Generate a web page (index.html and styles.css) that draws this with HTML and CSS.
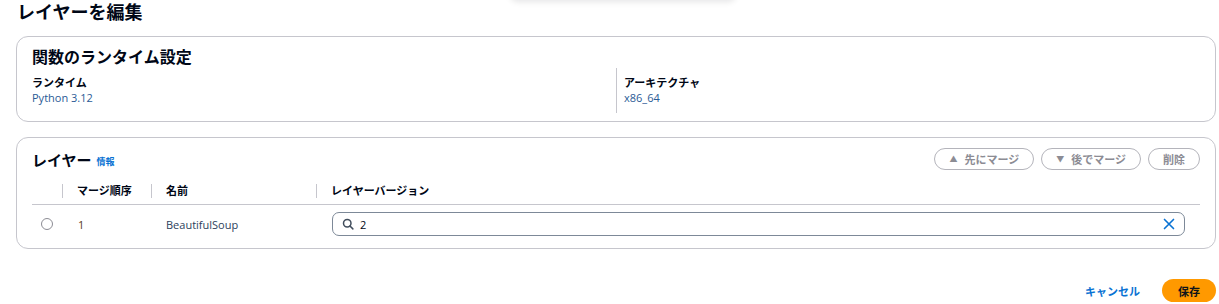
FILE: index.html
```html
<!DOCTYPE html>
<html lang="ja">
<head>
<meta charset="utf-8">
<link rel="stylesheet" href="styles.css">
</head>
<body>
<div class="popover-shadow"></div>
<main class="page">
  <h1 class="page-title">レイヤーを編集</h1>

  <section class="card">
    <h2 class="card-title">関数のランタイム設定</h2>
    <div class="kv-grid">
      <div class="kv">
        <div class="kv-label">ランタイム</div>
        <div class="kv-value">Python 3.12</div>
      </div>
      <div class="kv kv-divided">
        <div class="kv-label">アーキテクチャ</div>
        <div class="kv-value">x86_64</div>
      </div>
    </div>
  </section>

  <section class="card card-layers">
    <div class="card-header">
      <div class="card-header-title">
        <h2 class="card-title card-title-sm">レイヤー</h2>
        <a class="info-link">情報</a>
      </div>
      <div class="actions">
        <button class="btn-pill"><span class="tri">▲</span>先にマージ</button>
        <button class="btn-pill"><span class="tri">▼</span>後でマージ</button>
        <button class="btn-pill">削除</button>
      </div>
    </div>
    <div class="table">
      <div class="thead">
        <div class="th th-select"></div>
        <div class="th th-divided">マージ順序</div>
        <div class="th th-divided">名前</div>
        <div class="th th-divided">レイヤーバージョン</div>
      </div>
      <div class="tr">
        <div class="td td-select"><span class="radio"></span></div>
        <div class="td td-order">1</div>
        <div class="td td-name">BeautifulSoup</div>
        <div class="td td-version">
          <div class="search-input">
            <svg class="search-icon" width="12" height="12" viewBox="0 0 16 16"><circle cx="7" cy="7" r="5" fill="none" stroke="#414d5c" stroke-width="2"/><path d="M10.6 10.6 14.5 14.5" stroke="#414d5c" stroke-width="2" stroke-linecap="round"/></svg>
            <span class="search-value">2</span>
            <svg class="clear-icon" width="12" height="12" viewBox="0 0 16 16"><path d="M2 2 14 14M14 2 2 14" stroke="#0972d3" stroke-width="2.2" stroke-linecap="round"/></svg>
          </div>
        </div>
      </div>
    </div>
  </section>

  <div class="footer">
    <a class="cancel-link">キャンセル</a>
    <button class="btn-primary">保存</button>
  </div>
</main>
</body>
</html>
```

FILE: styles.css
```css
* { box-sizing: border-box; }
html, body {
  margin: 0;
  padding: 0;
  background: #ffffff;
}
body {
  font-family: "Open Sans", "Noto Sans CJK JP", sans-serif;
  color: #000716;
  font-size: 11px;
  width: 1219px;
  height: 304px;
  overflow: hidden;
  position: relative;
}
.popover-shadow {
  position: absolute;
  left: 510px;
  top: -20px;
  width: 226px;
  height: 20px;
  border-radius: 8px;
  box-shadow: 0 2px 6px rgba(0, 7, 22, 0.10);
  background: #fff;
}
.page {
  padding: 0 3px 0 16px;
}
.page-title {
  margin: 0;
  font-size: 18px;
  line-height: 24px;
  font-weight: 700;
  padding-left: 1px;
  color: #000716;
}
.card {
  margin-top: 12px;
  border: 1px solid #c6c6cd;
  border-radius: 12px;
  padding: 9px 15px 8px 15px;
}
.card-title {
  margin: 0;
  font-size: 16px;
  line-height: 22px;
  font-weight: 700;
  color: #000716;
}
.card-title-sm {
  font-size: 15px;
}
.kv-grid {
  display: grid;
  grid-template-columns: 1fr 1fr;
}
.kv {
  padding: 7px 0 8px 0;
}
.kv-divided {
  border-left: 1px solid #c6c6cd;
  padding-left: 7px;
}
.kv-label {
  font-size: 11px;
  line-height: 15px;
  font-weight: 700;
  color: #000716;
}
.kv-value {
  font-size: 11px;
  line-height: 15px;
  color: #2a5b96;
}
.card-layers {
  margin-top: 15px;
  padding: 10px 15px 5px 15px;
}
.card-header {
  display: flex;
  justify-content: space-between;
  align-items: center;
  height: 22px;
}
.card-header-title {
  display: flex;
  align-items: center;
  gap: 5px;
  padding-top: 2px;
}
.info-link {
  font-size: 9px;
  font-weight: 700;
  color: #0972d3;
  padding-top: 3px;
}
.actions {
  display: flex;
  gap: 7px;
}
.btn-pill {
  height: 22px;
  border: 1px solid #b4b4bb;
  border-radius: 12px;
  background: #fff;
  color: #8c8c94;
  font-family: inherit;
  font-size: 11px;
  font-weight: 700;
  padding: 0 14px;
  display: flex;
  align-items: center;
  gap: 7px;
  line-height: 1;
}
.tri {
  font-size: 8px;
  color: #8c8c94;
}
.table {
  margin-top: 7px;
}
.thead, .tr {
  display: grid;
  grid-template-columns: 30px 89px 165px 1fr;
}
.thead {
  height: 28px;
  border-bottom: 1px solid #c6c6cd;
  align-items: center;
}
.th {
  font-size: 11px;
  font-weight: 700;
  line-height: 15px;
  color: #000716;
}
.th-divided {
  border-left: 1px solid #c6c6cd;
  padding-left: 14px;
  line-height: 14px;
}
.tr {
  align-items: center;
  padding: 7px 0;
}
.td {
  font-size: 11px;
  line-height: 15px;
}
.td-select {
  display: flex;
  align-items: center;
  padding-left: 9px;
}
.radio {
  width: 12px;
  height: 12px;
  border: 1.5px solid #8c8c94;
  border-radius: 50%;
  display: inline-block;
}
.td-order {
  padding-left: 16px;
  color: #5a3b18;
}
.td-name {
  padding-left: 15px;
  color: #2d3f5c;
}
.td-version {
  padding-left: 16px;
  padding-right: 15px;
}
.search-input {
  height: 24px;
  border: 1px solid #7d8998;
  border-radius: 7px;
  display: flex;
  align-items: center;
  padding: 0 9px 0 9px;
}
.search-icon {
  flex: none;
}
.search-value {
  margin-left: 6px;
  flex: 1;
  font-size: 11px;
  color: #000716;
}
.clear-icon {
  flex: none;
}
.footer {
  display: flex;
  justify-content: flex-end;
  align-items: center;
  gap: 22px;
  margin-top: 30px;
}
.cancel-link {
  font-size: 11px;
  font-weight: 700;
  color: #0972d3;
}
.btn-primary {
  height: 23px;
  width: 54px;
  border: none;
  border-radius: 12px;
  background: #ff9900;
  color: #0f141a;
  font-family: inherit;
  font-size: 11px;
  font-weight: 700;
  padding: 0;
}
```
